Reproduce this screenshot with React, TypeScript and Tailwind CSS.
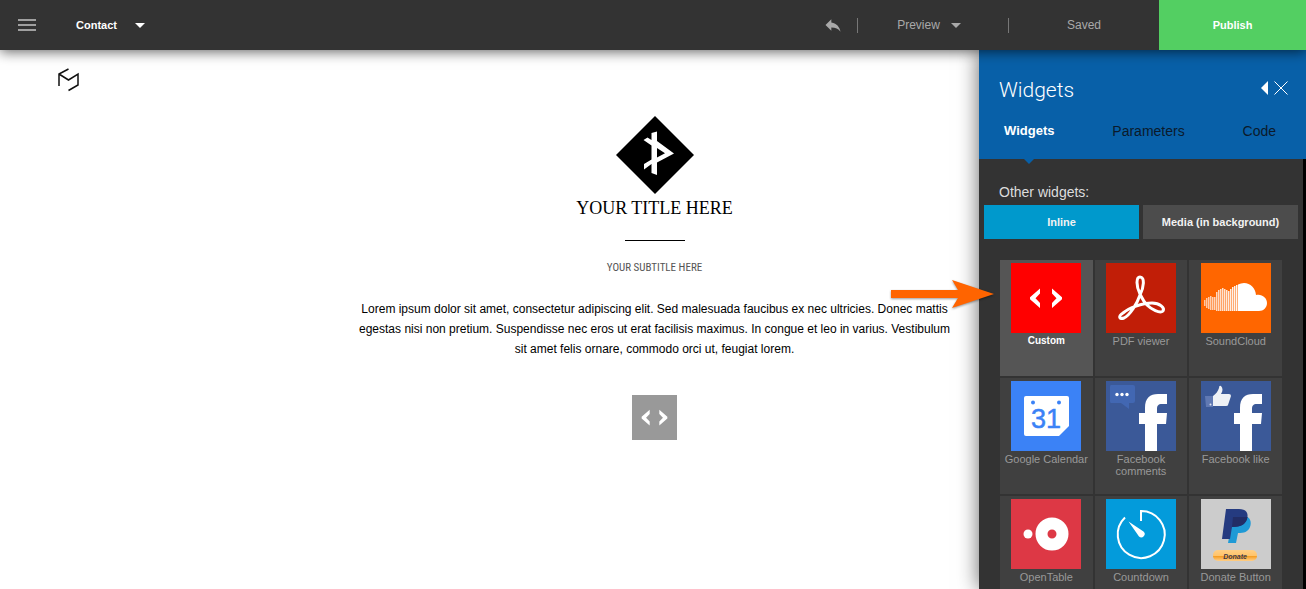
import { useState, type ReactNode } from "react";
import { MdReply } from "react-icons/md";

const TABS = ["Widgets", "Parameters", "Code"]

function Caret({ className }: { className?: string }) {
    return (
        <svg viewBox="0 0 10 5" className={`w-[10px] h-[5px] ${className ?? ""}`} fill="currentColor">
            <path d="M0 0h10L5 5z" />
        </svg>
    )
}

function CodeIcon({ viewBox = "0 0 70 70" }: { viewBox?: string }) {
    return (
        <svg viewBox={viewBox} className="size-full" fill="#fff">
            <path d="M29 25.500V30.500L24.500 35.200L29 40V45L19 36.200V34.200Z" />
            <path d="M41 25.500V30.500L45.500 35.200L41 40V45L51 36.200V34.200Z" />
        </svg>
    )
}

function PdfIcon() {
    return (
        <svg viewBox="0 0 70 70" className="size-full" fill="none" stroke="#fff" strokeWidth="3" strokeLinejoin="round">
            <path d="M34 31C30 23 30 14 34 14C39 14 38 24 34 32C31 41 24 52 18 55C13 57 12 53 17 50C23 45 36 40 46 40C54 40 59 45 57 48C54 51 45 46 41 42C37 38 36 35 34 31Z" />
        </svg>
    )
}

// [x, top, bottom] of the stripes left of the cloud
const CLOUD_BARS = [
    [3, 37, 43], [5, 35, 45], [7, 34, 46], [9, 33, 47], [11, 34, 47], [13, 34, 47],
    [15, 29, 48], [17, 27, 48], [19, 26, 48], [21, 25, 48], [23, 26, 48], [25, 27, 48],
    [27, 28, 48], [29, 26, 48], [31, 24, 48], [33, 23, 48], [35, 22, 48],
]

function CloudIcon() {
    return (
        <svg viewBox="0 0 70 70" className="size-full" fill="#fff">
            {CLOUD_BARS.map(([x, top, bottom]) => (
                <rect key={x} x={x} y={top} width="1.5" height={bottom - top} opacity={0.6 + x / 100} />
            ))}
            <path d="M37 21.500C39 20.500 41 20 43 20C49.500 20 54.500 25 55 32C60.500 30.500 66 34.500 66 40C66 44.500 62.500 48 58 48H37Z" />
        </svg>
    )
}

function CalendarIcon() {
    return (
        <svg viewBox="0 0 70 70" className="size-full">
            <path fill="#fff" d="M15 15H56Q58 15 58 17V45L48 55H15Q13 55 13 53V17Q13 15 15 15Z" />
            <circle cx="22" cy="21.500" r="2" fill="#3b82f6" />
            <circle cx="48" cy="21.500" r="2" fill="#3b82f6" />
            <text x="35" y="47" textAnchor="middle" fontSize="27" fill="#3b82f6" stroke="#3b82f6" strokeWidth="0.5" fontFamily="Liberation Sans, sans-serif">31</text>
        </svg>
    )
}

function FacebookLetter() {
    return <path fill="#fff" d="M39 70V43H33V32H39V27C39 17 44 13 52 13H61V23H56C52 23 51 25 51 28V32H61L60 43H51V70Z" />
}

function CommentsIcon() {
    return (
        <svg viewBox="0 0 70 70" className="size-full">
            <path fill="#4267b2" d="M5 4H27Q29 4 29 6V20Q29 22 27 22H23V28L15 22H5Q4 22 4 20V6Q4 4 5 4Z" />
            <circle cx="11" cy="13.500" r="1.700" fill="#fff" />
            <circle cx="16" cy="13.500" r="1.700" fill="#fff" />
            <circle cx="21" cy="13.500" r="1.700" fill="#fff" />
            <FacebookLetter />
        </svg>
    )
}

function LikeIcon() {
    return (
        <svg viewBox="0 0 70 70" className="size-full">
            <path fill="#6079b3" d="M4 15H12V26H5Z" />
            <circle cx="9.500" cy="23.500" r="1" fill="#dfe5f0" />
            <path fill="#eef1f5" d="M12 15C15 13 17 10 18 7Q18 4 20 5C22 7 22 10 20 13H28Q30 13 30 15L27 24Q27 25 25 25H12Z" />
            <FacebookLetter />
        </svg>
    )
}

function OpenTableIcon() {
    return (
        <svg viewBox="0 0 70 70" className="size-full" fill="#fff">
            <circle cx="17" cy="35" r="4.500" />
            <circle cx="41" cy="35" r="10.500" fill="none" stroke="#fff" strokeWidth="12" />
        </svg>
    )
}

function CountdownIcon() {
    return (
        <svg viewBox="0 0 70 70" className="size-full">
            <path fill="none" stroke="#fff" strokeWidth="2" d="M35 22V12A23.500 23.500 0 1 1 19 18.500" />
            <path fill="#fff" d="M22.500 22.500L37.500 32.500A3.300 3.300 0 0 1 33 37.500Z" />
        </svg>
    )
}

function DonateIcon() {
    return (
        <svg viewBox="0 0 70 70" className="size-full">
            <defs>
                <linearGradient id="donate" x1="0" y1="0" x2="0" y2="1">
                    <stop offset="0" stopColor="#ffcf85" />
                    <stop offset="0.5" stopColor="#ffc46b" />
                    <stop offset="0.55" stopColor="#f59a1c" />
                    <stop offset="1" stopColor="#ffd08a" />
                </linearGradient>
            </defs>
            <path fill="#1f9ad6" d="M32 17H44C49 18 51 23 49 28C47 33 43 34 37 34L35 44H27Z" />
            <path fill="#253b80" d="M25 10H38C45 10 48 14 46 20C44 26 39 28 31 28L29 40H21Z" />
            <path fill="#222d65" d="M32 18H46.500C45.500 25 40 28 31 28Z" />
            <rect x="12" y="51" width="44" height="11" rx="5" fill="url(#donate)" />
            <text x="34" y="59.500" textAnchor="middle" fontSize="7" fontWeight="bold" fontStyle="italic" fill="#3f3a4a" fontFamily="Liberation Sans, sans-serif">Donate</text>
        </svg>
    )
}

const WIDGETS: { name: string, bg: string, icon: ReactNode }[] = [
    { name: "Custom", bg: "bg-[#ff0000]", icon: <CodeIcon /> },
    { name: "PDF viewer", bg: "bg-[#c11e07]", icon: <PdfIcon /> },
    { name: "SoundCloud", bg: "bg-[#ff6600]", icon: <CloudIcon /> },
    { name: "Google Calendar", bg: "bg-[#3b82f6]", icon: <CalendarIcon /> },
    { name: "Facebook comments", bg: "bg-[#3b5998]", icon: <CommentsIcon /> },
    { name: "Facebook like", bg: "bg-[#3b5998]", icon: <LikeIcon /> },
    { name: "OpenTable", bg: "bg-[#dd3845]", icon: <OpenTableIcon /> },
    { name: "Countdown", bg: "bg-[#039bdb]", icon: <CountdownIcon /> },
    { name: "Donate Button", bg: "bg-[#cccccc]", icon: <DonateIcon /> },
]

function TopBar() {
    return (
        <header className="relative z-20 flex items-center h-[50px] shrink-0 bg-[#333333] text-xs text-[#a9a9a9] shadow-[0_2px_12px_rgba(0,0,0,0.6)]">
            <button aria-label="Menu" className="flex flex-col gap-[3px] ml-[18px] w-[18px]">
                <span className="h-[2px] bg-[#a0a0a0]" />
                <span className="h-[2px] bg-[#a0a0a0]" />
                <span className="h-[2px] bg-[#a0a0a0]" />
            </button>
            <button className="flex items-center gap-[18px] ml-10 text-[11px] font-bold text-white">
                Contact
                <Caret />
            </button>
            <button aria-label="Undo" className="ml-auto mr-[14px]">
                <MdReply className="size-5" />
            </button>
            <button className="flex items-center justify-center gap-[11px] w-[151px] h-[15px] pr-2 border-l border-[#777777]">
                Preview
                <Caret />
            </button>
            <div className="flex items-center justify-center w-[151px] h-[15px] border-l border-[#777777]">Saved</div>
            <button className="w-[147px] h-full bg-[#53cf62] text-[11px] font-bold text-white">Publish</button>
        </header>
    )
}

function Canvas() {
    return (
        <main className="relative flex-1 pl-[3px] bg-white text-black">
            <svg viewBox="0 0 24 24" className="absolute left-[57px] top-[18px] size-6" fill="none" stroke="#111" strokeWidth="1.5">
                <path d="M2 18V6l9.500-5M2 6l9.500 6L21 6v11l-9.500 5.500" />
            </svg>
            <div className="flex flex-col items-center pt-[66px] text-center">
                <svg viewBox="0 0 78 78" className="size-[78px]">
                    <path d="M39 0L78 39L39 78L0 39Z" />
                    <path fill="#fff" d="M35.500 17L41 15.500V25L58 37.500L41 46.500V59L35.500 57V48L28 53.500V48L35.500 43.500V29.500L27.500 24L31.500 21.500L35.500 24ZM41 32V41.500L49 37.200Z" fillRule="evenodd" />
                </svg>
                <h1 className="mt-1 font-['Liberation_Serif',serif] text-[18px] leading-5">YOUR TITLE HERE</h1>
                <hr className="mt-[22px] w-[60px] border-black" />
                <h2 className="mt-5 font-['Liberation_Sans_Narrow','Roboto_Condensed',sans-serif] text-[11px] leading-[14px] text-[#555555]">YOUR SUBTITLE HERE</h2>
                <p className="mt-6 max-w-[600px] text-xs leading-5">
                    Lorem ipsum dolor sit amet, consectetur adipiscing elit. Sed malesuada faucibus ex nec ultricies. Donec mattis egestas nisi non pretium. Suspendisse nec eros ut erat facilisis maximus. In congue et leo in varius. Vestibulum sit amet felis ornare, commodo orci ut, feugiat lorem.
                </p>
                <div className="mt-9 size-[45px] bg-[#999999]">
                    <CodeIcon viewBox="7 7 56 56" />
                </div>
            </div>
        </main>
    )
}

function WidgetPanel() {
    const [tab, setTab] = useState("Widgets")
    const [selected, setSelected] = useState("Custom")

    return (
        <aside className="absolute right-0 inset-y-0 z-10 flex flex-col w-[327px] bg-[#333333] shadow-[0_0_20px_rgba(0,0,0,0.6)]">
            <div className="h-[109px] shrink-0 bg-[#0860a8]">
                <div className="flex items-center justify-between pt-6 pl-5 pr-[18px]">
                    <h2 className="font-[Roboto,sans-serif] text-[21px] leading-8 font-light text-white">Widgets</h2>
                    <div className="flex items-center gap-[6px] pb-1">
                        <button aria-label="Collapse">
                            <svg viewBox="0 0 7 14" className="w-[7px] h-[14px]" fill="#fff"><path d="M7 0v14L0 7z" /></svg>
                        </button>
                        <button aria-label="Close">
                            <svg viewBox="0 0 14 14" className="size-[14px]" stroke="#fff"><path d="M.5.5l13 13M13.500.5l-13 13" /></svg>
                        </button>
                    </div>
                </div>
                <nav className="flex justify-between pt-[15px] pl-[25px] pr-[30px] text-sm leading-5">
                    {TABS.map((name) => (
                        <button
                            key={name}
                            onClick={() => setTab(name)}
                            className={`relative ${tab === name ? "text-[13px] font-bold text-white" : "text-[#0b1a2b]"}`}
                        >
                            {name}
                            {tab === name && (
                                <svg viewBox="0 0 10 5" className="absolute left-1/2 top-[38px] -translate-x-1/2 w-[10px] h-[5px]" fill="#0860a8">
                                    <path d="M0 0h10L5 5z" />
                                </svg>
                            )}
                        </button>
                    ))}
                </nav>
            </div>
            <div className="flex-1 min-h-0 overflow-hidden border-r-[3px] border-black">
                <p className="pt-[23px] pl-5 text-sm leading-5 text-[#dddddd]">Other widgets:</p>
                <div className="grid grid-cols-2 gap-1 mt-[3px] px-[5px] text-[11px] font-bold text-[#f2f2f2]">
                    <button className="h-[34px] bg-[#0099cc]">Inline</button>
                    <button className="h-[34px] bg-[#4c4c4c]">Media (in background)</button>
                </div>
                <div className="grid grid-cols-3 gap-[2px] mt-[21px] ml-[21px] mr-[21px]">
                    {WIDGETS.map((widget) => (
                        <button
                            key={widget.name}
                            onClick={() => setSelected(widget.name)}
                            className={`flex flex-col items-center h-[116px] pt-[3px] leading-3 ${selected === widget.name ? "bg-[#555555] text-[10px] font-bold text-white" : "bg-[#404040] text-[11px] text-[#999999]"}`}
                        >
                            <span className={`size-[70px] shrink-0 mb-[2px] ${widget.bg}`}>{widget.icon}</span>
                            {widget.name}
                        </button>
                    ))}
                </div>
            </div>
            <svg viewBox="0 0 104 30" className="absolute -left-[89px] top-[229px] w-[104px] h-[30px] drop-shadow-[0_1px_1px_rgba(0,0,0,0.4)]" fill="#ff6400">
                <path d="M1 11h67l-6-10 42 14-42 14 6-10H1z" />
            </svg>
        </aside>
    )
}

export default function App() {
    return (
        <div className="flex flex-col h-screen overflow-hidden font-['Liberation_Sans',Arial,sans-serif]">
            <TopBar />
            <div className="relative flex flex-1 min-h-0">
                <Canvas />
                <WidgetPanel />
            </div>
        </div>
    )
}
